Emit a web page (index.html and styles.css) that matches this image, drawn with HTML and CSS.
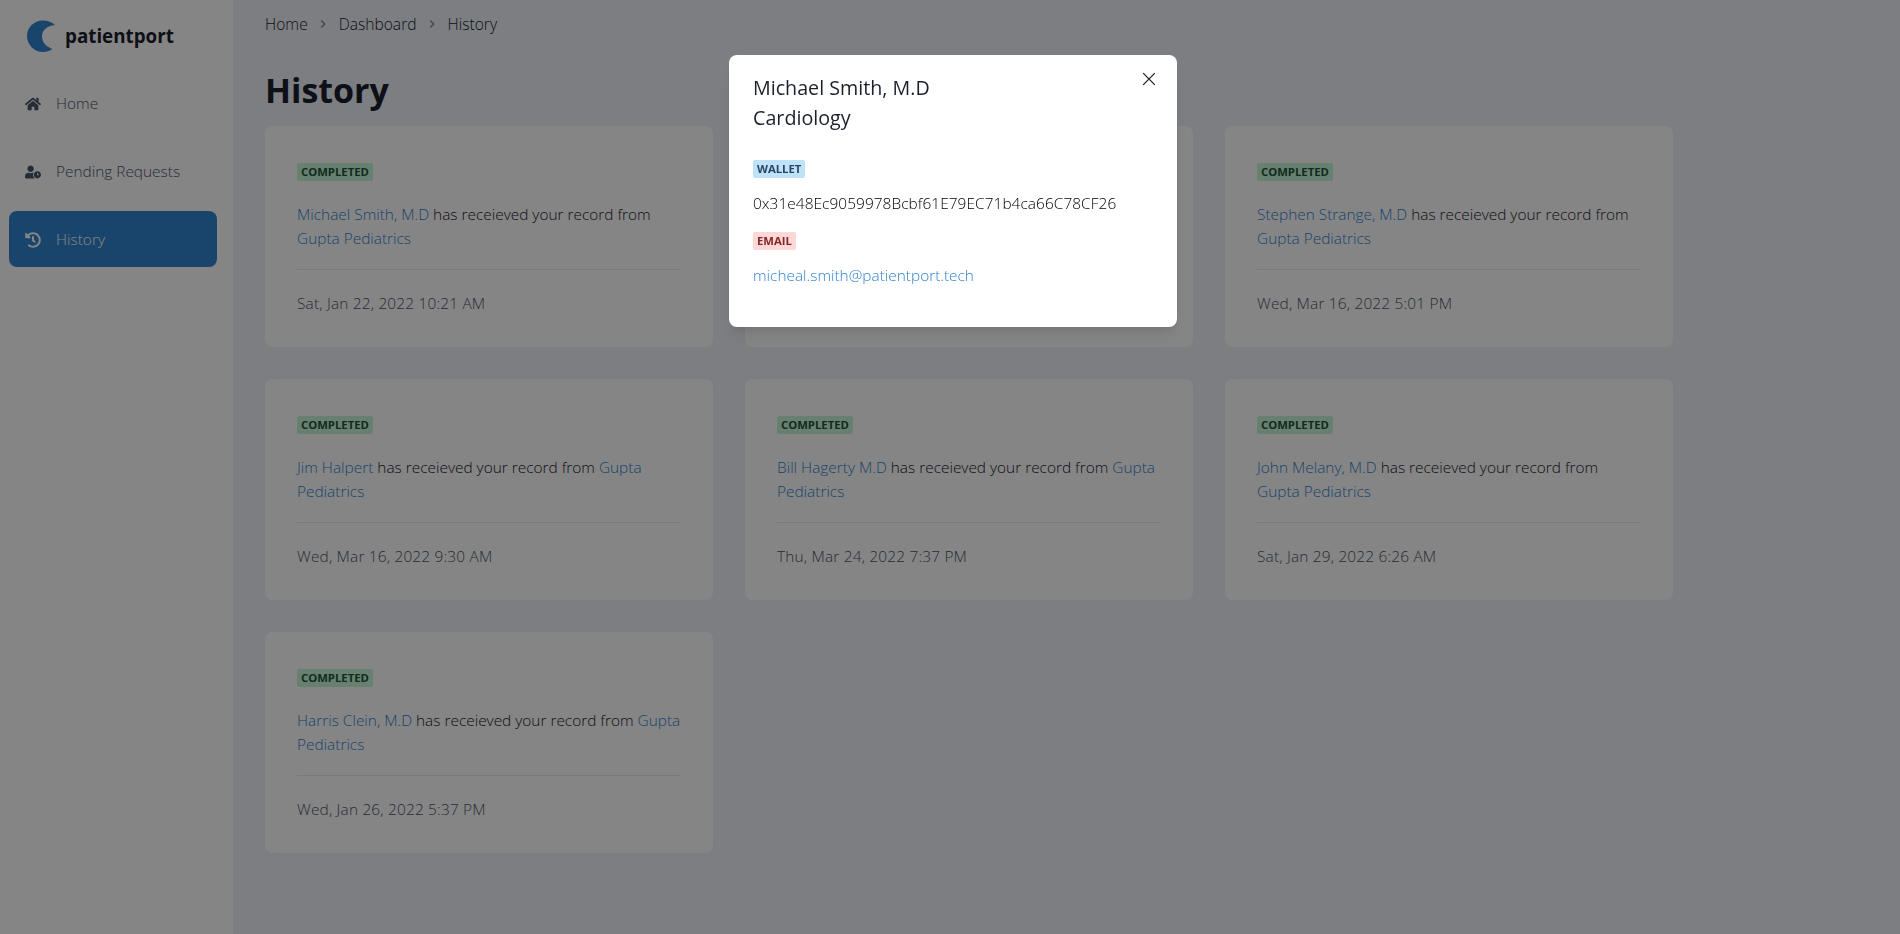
FILE: index.html
```html
<!DOCTYPE html>
<html lang="en">
<head>
<meta charset="utf-8">
<title>History</title>
<link rel="stylesheet" href="styles.css">
</head>
<body>
<div class="app">
  <aside class="sidebar">
    <div class="brand">
      <svg class="logo" viewBox="0 0 28 32"><path d="M28 5C25 2 20.500 .5 16 .5 7 .5 0 7.500 0 16s7 16 16 16c3.500 0 6.500-1 9.500-3C20 27 15 23 15 16.500 15 10 20 6 28 5z"/></svg>
      <span class="brand-name">patientport</span>
    </div>
    <nav class="nav">
      <a class="nav-item"><svg class="nav-icon" viewBox="0 0 576 512"><path d="M280.37 148.26L96 300.11V464a16 16 0 0 0 16 16l112.06-.29a16 16 0 0 0 15.92-16V368a16 16 0 0 1 16-16h64a16 16 0 0 1 16 16v95.64a16 16 0 0 0 16 16.05L464 480a16 16 0 0 0 16-16V300L295.67 148.26a12.19 12.19 0 0 0-15.3 0zM571.6 251.47L488 182.56V44.05a12 12 0 0 0-12-12h-56a12 12 0 0 0-12 12v72.61L318.47 43a48 48 0 0 0-61 0L4.34 251.47a12 12 0 0 0-1.6 16.9l25.5 31A12 12 0 0 0 45.15 301l235.22-193.74a12.19 12.19 0 0 1 15.3 0L530.9 301a12 12 0 0 0 16.9-1.6l25.5-31a12 12 0 0 0-1.7-16.93z"/></svg>Home</a>
      <a class="nav-item"><svg class="nav-icon" viewBox="0 0 640 512"><path d="M496 224c-79.6 0-144 64.4-144 144s64.4 144 144 144 144-64.4 144-144-64.4-144-144-144zm64 150.3c0 5.3-4.400 9.700-9.700 9.700h-60.600c-5.300 0-9.700-4.400-9.700-9.700v-76.600c0-5.300 4.400-9.700 9.700-9.700h12.600c5.300 0 9.700 4.400 9.700 9.700V352h38.300c5.300 0 9.700 4.400 9.700 9.700v12.600zM320 368c0-27.800 6.700-54.100 18.200-77.500-8-1.500-16.200-2.500-24.600-2.500h-16.700c-22.200 10.200-46.900 16-72.900 16s-50.600-5.800-72.900-16h-16.700C60.200 288 0 348.200 0 422.400V464c0 26.500 21.500 48 48 48h347.100c-45.300-31.900-75.100-84.500-75.100-144zm-96-112c70.700 0 128-57.300 128-128S294.700 0 224 0 96 57.300 96 128s57.300 128 128 128z"/></svg>Pending Requests</a>
      <a class="nav-item active"><svg class="nav-icon" viewBox="0 0 512 512"><path d="M504 255.531c.253 136.640-111.180 248.372-247.820 248.468-59.015.042-113.223-20.530-155.822-54.911-11.077-8.940-11.905-25.541-1.839-35.607l11.267-11.267c8.609-8.609 22.353-9.551 31.891-1.984C173.062 425.135 212.781 440 256 440c101.705 0 184-82.311 184-184 0-101.705-82.311-184-184-184-48.814 0-93.149 18.969-126.068 49.932l50.754 50.754c10.080 10.080 2.941 27.314-11.313 27.314H24c-8.837 0-16-7.163-16-16V38.627c0-14.254 17.234-21.393 27.314-11.314l49.372 49.372C129.209 34.136 189.552 8 256 8c136.810 0 247.747 110.780 248 247.531zm-180.912 78.784l9.823-12.630c8.138-10.463 6.253-25.542-4.210-33.679L288 256.349V152c0-13.255-10.745-24-24-24h-16c-13.255 0-24 10.745-24 24v135.651l65.409 50.874c10.463 8.137 25.541 6.253 33.679-4.210z"/></svg>History</a>
    </nav>
  </aside>
  <main class="main">
    <div class="crumbs">
      <span>Home</span><svg class="chev" viewBox="0 0 24 24"><path d="M9 6l6 6-6 6"/></svg>
      <span>Dashboard</span><svg class="chev" viewBox="0 0 24 24"><path d="M9 6l6 6-6 6"/></svg>
      <span>History</span>
    </div>
    <h1 class="title">History</h1>
    <section class="grid">
      <article class="card"><span class="badge green">Completed</span><p class="msg"><a>Michael Smith, M.D</a> has receieved your record from <a>Gupta Pediatrics</a></p><hr class="rule"><p class="date">Sat, Jan 22, 2022 10:21 AM</p></article>
      <article class="card"><span class="badge green">Completed</span><p class="msg"><a>Michael Smith, M.D</a> has receieved your record from <a>Gupta Pediatrics</a></p><hr class="rule"><p class="date">Sat, Jan 22, 2022 10:21 AM</p></article>
      <article class="card"><span class="badge green">Completed</span><p class="msg"><a>Stephen Strange, M.D</a> has receieved your record from <a>Gupta Pediatrics</a></p><hr class="rule"><p class="date">Wed, Mar 16, 2022 5:01 PM</p></article>
      <article class="card"><span class="badge green">Completed</span><p class="msg"><a>Jim Halpert</a> has receieved your record from <a>Gupta Pediatrics</a></p><hr class="rule"><p class="date">Wed, Mar 16, 2022 9:30 AM</p></article>
      <article class="card"><span class="badge green">Completed</span><p class="msg"><a>Bill Hagerty M.D</a> has receieved your record from <a>Gupta Pediatrics</a></p><hr class="rule"><p class="date">Thu, Mar 24, 2022 7:37 PM</p></article>
      <article class="card"><span class="badge green">Completed</span><p class="msg"><a>John Melany, M.D</a> has receieved your record from <a>Gupta Pediatrics</a></p><hr class="rule"><p class="date">Sat, Jan 29, 2022 6:26 AM</p></article>
      <article class="card"><span class="badge green">Completed</span><p class="msg"><a>Harris Clein, M.D</a> has receieved your record from <a>Gupta Pediatrics</a></p><hr class="rule"><p class="date">Wed, Jan 26, 2022 5:37 PM</p></article>
    </section>
  </main>
</div>
<div class="overlay"></div>
<div class="modal">
  <button class="close" aria-label="Close"><svg viewBox="0 0 24 24"><path d="M2 2l20 20M22 2L2 22"/></svg></button>
  <h2 class="modal-name">Michael Smith, M.D</h2>
  <p class="modal-spec">Cardiology</p>
  <span class="badge blue">Wallet</span>
  <p class="modal-val wallet">0x31e48Ec9059978Bcbf61E79EC71b4ca66C78CF26</p>
  <span class="badge red">Email</span>
  <p class="modal-val"><a class="mail">micheal.smith@patientport.tech</a></p>
</div>
</body>
</html>
```
FILE: styles.css
```css
* { box-sizing: border-box; }
html, body { margin: 0; height: 100%; }
body {
  font-family: "Open Sans", "Noto Sans", sans-serif;
  font-weight: 300;
  font-size: 15.4px;
  line-height: 24px;
  color: #1A202C;
  background: #EDF2F7;
  overflow: hidden;
}
.app { display: flex; height: 934px; }
.sidebar { width: 233px; flex: none; background: #fff; padding: 19px 16px 0 9px; }
.brand { display: flex; align-items: center; gap: 10px; padding-left: 18px; height: 34px; }
.logo { width: 28px; height: 32px; fill: #3182CE; flex: none; }
.brand-name { font-size: 18.8px; font-weight: 700; color: #1A202C; }
.nav { display: flex; flex-direction: column; gap: 12px; margin-top: 22px; }
.nav-item { display: flex; align-items: center; height: 56px; padding: 2px 0 0 16px; border-radius: 8px; color: #4A5568; }
.nav-item.active { background: #3182CE; color: #fff; }
.nav-icon { width: 16px; height: 16px; margin-right: 15px; fill: currentColor; flex: none; }
.main { flex: 1; padding: 0 32px; }
.crumbs { display: flex; align-items: center; height: 47px; font-size: 15.6px; color: #1A202C; }
.chev { width: 14px; height: 14px; margin: 0 8.5px; fill: none; stroke: #718096; stroke-width: 2; }
.title { margin: 21px 0 14px; font-size: 34px; line-height: 44px; font-weight: 700; }
.grid { display: grid; grid-template-columns: repeat(3, 448px); gap: 32px; }
.card { background: #fff; border-radius: 8px; padding: 32px; height: 221px; }
.badge { display: block; width: max-content; padding: 0 4px; height: 18px; line-height: 18px; border-radius: 2px; font-size: 11.3px; font-weight: 700; text-transform: uppercase; }
.green { background: #C6F6D5; color: #22543D; }
.blue { background: #BEE3F8; color: #2A4365; }
.red { background: #FED7D7; color: #822727; }
.card .badge { margin-top: 5px; }
.msg { margin: 22px 0 0; }
.msg a { color: #3182CE; }
.rule { margin: 18px 0 0; border: 0; border-top: 1px solid #E2E8F0; }
.date { margin: 22px 0 0; letter-spacing: .19px; color: #4A5568; }
.overlay { position: fixed; inset: 0; background: rgba(0, 0, 0, 0.48); }
.modal { position: fixed; left: 729px; top: 55px; width: 448px; height: 272px; background: #fff; border-radius: 8px; padding: 18px 24px; box-shadow: 0 10px 15px -3px rgba(0,0,0,.1), 0 4px 6px -2px rgba(0,0,0,.05); }
.close { position: absolute; top: 8px; right: 12px; width: 32px; height: 32px; padding: 9px; background: none; border: 0; }
.close svg { display: block; width: 14px; height: 14px; fill: none; stroke: #1A202C; stroke-width: 2.2; }
.modal-name { margin: 0; font-size: 19.7px; line-height: 30px; font-weight: 500; }
.modal-spec { margin: 0 0 27px; font-size: 19.7px; line-height: 30px; font-weight: 400; }
.modal-val { margin: 14px 0 16px; color: #000; }
.wallet { letter-spacing: .07px; }
.mail { color: #3182CE; }
```
